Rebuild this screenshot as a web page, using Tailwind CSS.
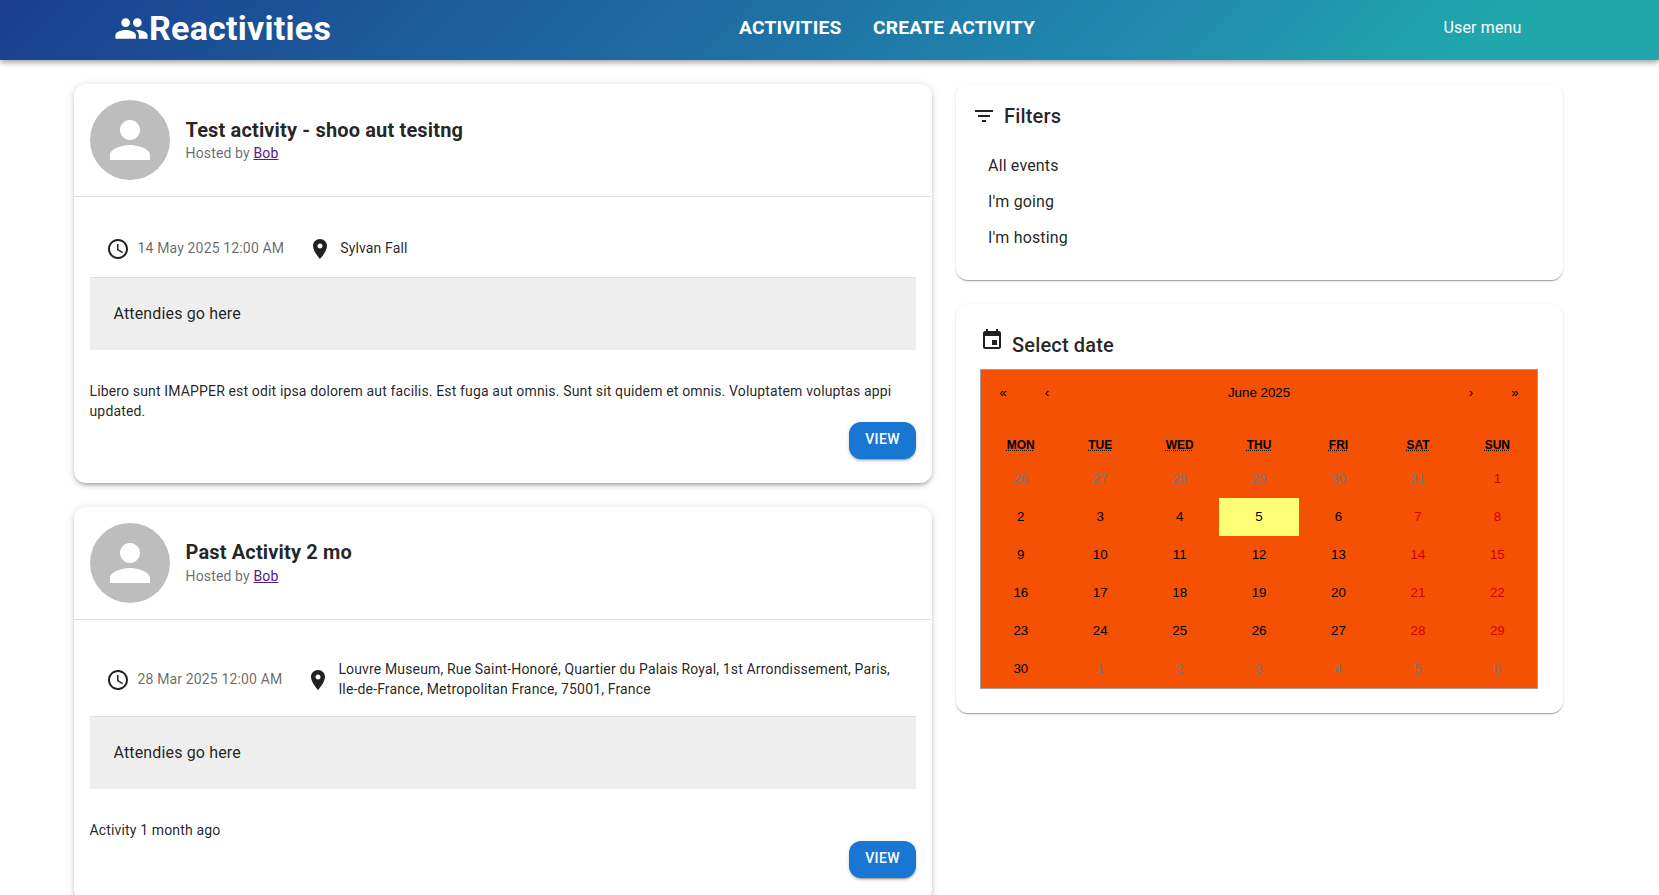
<!DOCTYPE html>
<html lang="en">
<head>
<meta charset="utf-8">
<title>Reactivities</title>
<script src="https://cdn.jsdelivr.net/npm/@tailwindcss/browser@4"></script>
</head>
<body class="bg-white font-['Roboto',sans-serif] text-black/87 overflow-hidden h-[895px]">
<header class="relative z-10 h-[60px] pb-[4px] flex items-center bg-[linear-gradient(135deg,#1a3f8f_0%,#218aae_69%,#20a7ac_89%)] text-white shadow-[0_2px_4px_-1px_rgba(0,0,0,0.2),0_4px_5px_0_rgba(0,0,0,0.14),0_1px_10px_0_rgba(0,0,0,0.12)]">
  <div class="ml-[114px] flex items-center w-[217px] shrink-0">
    <svg viewBox="0 0 24 24" class="w-[35px] h-[35px] fill-white shrink-0"><path d="M16 11c1.66 0 2.99-1.34 2.99-3S17.66 5 16 5s-3 1.34-3 3 1.34 3 3 3m-8 0c1.66 0 2.99-1.34 2.99-3S9.66 5 8 5 5 6.34 5 8s1.34 3 3 3m0 2c-2.33 0-7 1.17-7 3.5V19h14v-2.5c0-2.33-4.67-3.5-7-3.5m8 0c-.29 0-.62.02-.97.05 1.16.84 1.97 1.97 1.97 3.45V19h6v-2.5c0-2.33-4.67-3.5-7-3.5"/></svg>
    <span class="text-[34px] font-bold leading-[40px] tracking-[0.25px]">Reactivities</span>
  </div>
  <nav class="ml-[408px] flex gap-[31.5px] text-[19.2px] font-bold uppercase tracking-[0.2px]">
    <a>Activities</a>
    <a>Create activity</a>
  </nav>
  <div class="ml-auto mr-[137.5px] text-base tracking-[0.15px]">User menu</div>
</header>

<main class="ml-[73.5px] w-[1489px] pt-6 grid grid-cols-12 gap-6 items-start tracking-[0.15px]">
  <div class="col-span-7 flex flex-col gap-6">
    <article class="rounded-xl bg-white pb-6 shadow-[0_3px_3px_-2px_rgba(0,0,0,0.2),0_3px_4px_0_rgba(0,0,0,0.14),0_1px_8px_0_rgba(0,0,0,0.12)]">
      <div class="flex items-center gap-4 p-4 border-b border-[#e0e0e0] h-[113px]">
        <div class="w-20 h-20 rounded-full bg-[#bdbdbd] flex items-center justify-center shrink-0">
          <svg viewBox="0 0 24 24" class="w-[60px] h-[60px] fill-white"><path d="M12 12c2.21 0 4-1.79 4-4s-1.79-4-4-4-4 1.79-4 4 1.79 4 4 4zm0 2c-2.67 0-8 1.34-8 4v2h16v-2c0-2.66-5.33-4-8-4z"/></svg>
        </div>
        <div>
          <div class="text-xl font-bold leading-[32px] mt-[-3px] h-[29px]">Test activity - shoo aut tesitng</div>
          <div class="text-sm leading-5 text-black/60">Hosted by <a class="underline text-[#551a8b]">Bob</a></div>
        </div>
      </div>
      <div class="mx-4">
        <div class="flex items-center pl-4 pr-4 pt-10 pb-4 text-sm leading-5">
          <svg viewBox="0 0 24 24" class="w-6 h-6 fill-black/87 shrink-0"><path d="M11.99 2C6.47 2 2 6.48 2 12s4.47 10 9.99 10C17.52 22 22 17.52 22 12S17.52 2 11.99 2M12 20c-4.42 0-8-3.58-8-8s3.58-8 8-8 8 3.58 8 8-3.58 8-8 8m.5-13H11v6l5.25 3.15.75-1.23-4.5-2.67z"/></svg>
          <span class="ml-2 text-black/60 whitespace-nowrap -translate-y-px">14 May 2025 12:00 AM</span>
          <svg viewBox="0 0 24 24" class="ml-6 w-6 h-6 fill-black/87 shrink-0"><path d="M12 2C8.13 2 5 5.13 5 9c0 5.25 7 13 7 13s7-7.75 7-13c0-3.87-3.13-7-7-7m0 9.5c-1.38 0-2.5-1.12-2.5-2.5s1.12-2.5 2.5-2.5 2.5 1.12 2.5 2.5-1.12 2.5-2.5 2.5"/></svg>
          <span class="ml-2 -translate-y-px">Sylvan Fall</span>
        </div>
        <div class="h-[73px] border-t border-[#e0e0e0] bg-[#eeeeee] pl-6 flex items-center text-base">Attendies go here</div>
        <p class="mt-[31px] text-sm leading-5">Libero sunt IMAPPER est odit ipsa dolorem aut facilis. Est fuga aut omnis. Sunt sit quidem et omnis. Voluptatem voluptas appi updated.</p>
        <div class="flex justify-end mt-[1px]">
          <button class="w-[67px] h-[37px] pb-1 rounded-xl bg-[#1976d2] text-white text-sm font-medium uppercase tracking-[0.4px] shadow-[0_3px_1px_-2px_rgba(0,0,0,0.2),0_2px_2px_0_rgba(0,0,0,0.14),0_1px_5px_0_rgba(0,0,0,0.12)]">View</button>
        </div>
      </div>
    </article>

    <article class="rounded-xl bg-white pb-6 shadow-[0_3px_3px_-2px_rgba(0,0,0,0.2),0_3px_4px_0_rgba(0,0,0,0.14),0_1px_8px_0_rgba(0,0,0,0.12)]">
      <div class="flex items-center gap-4 p-4 border-b border-[#e0e0e0] h-[113px]">
        <div class="w-20 h-20 rounded-full bg-[#bdbdbd] flex items-center justify-center shrink-0">
          <svg viewBox="0 0 24 24" class="w-[60px] h-[60px] fill-white"><path d="M12 12c2.21 0 4-1.79 4-4s-1.79-4-4-4-4 1.79-4 4 1.79 4 4 4zm0 2c-2.67 0-8 1.34-8 4v2h16v-2c0-2.66-5.33-4-8-4z"/></svg>
        </div>
        <div>
          <div class="text-xl font-bold leading-[32px] mt-[-4px] h-[30px]">Past Activity 2 mo</div>
          <div class="text-sm leading-5 text-black/60">Hosted by <a class="underline text-[#551a8b]">Bob</a></div>
        </div>
      </div>
      <div class="mx-4">
        <div class="flex items-center pl-4 pr-4 pt-10 pb-4 text-sm leading-5">
          <svg viewBox="0 0 24 24" class="w-6 h-6 fill-black/87 shrink-0"><path d="M11.99 2C6.47 2 2 6.48 2 12s4.47 10 9.99 10C17.52 22 22 17.52 22 12S17.52 2 11.99 2M12 20c-4.42 0-8-3.58-8-8s3.58-8 8-8 8 3.58 8 8-3.58 8-8 8m.5-13H11v6l5.25 3.15.75-1.23-4.5-2.67z"/></svg>
          <span class="ml-2 text-black/60 whitespace-nowrap -translate-y-px">28 Mar 2025 12:00 AM</span>
          <svg viewBox="0 0 24 24" class="ml-6 w-6 h-6 fill-black/87 shrink-0"><path d="M12 2C8.13 2 5 5.13 5 9c0 5.25 7 13 7 13s7-7.75 7-13c0-3.87-3.13-7-7-7m0 9.5c-1.38 0-2.5-1.12-2.5-2.5s1.12-2.5 2.5-2.5 2.5 1.12 2.5 2.5-1.12 2.5-2.5 2.5"/></svg>
          <span class="ml-2 -translate-y-px">Louvre Museum, Rue Saint-Honoré, Quartier du Palais Royal, 1st Arrondissement, Paris, Ile-de-France, Metropolitan France, 75001, France</span>
        </div>
        <div class="h-[73px] border-t border-[#e0e0e0] bg-[#eeeeee] pl-6 flex items-center text-base">Attendies go here</div>
        <p class="mt-[31px] text-sm leading-5">Activity 1 month ago</p>
        <div class="flex justify-end mt-[1px]">
          <button class="w-[67px] h-[37px] pb-1 rounded-xl bg-[#1976d2] text-white text-sm font-medium uppercase tracking-[0.4px] shadow-[0_3px_1px_-2px_rgba(0,0,0,0.2),0_2px_2px_0_rgba(0,0,0,0.14),0_1px_5px_0_rgba(0,0,0,0.12)]">View</button>
        </div>
      </div>
    </article>
  </div>

  <aside class="col-span-5 flex flex-col gap-6">
    <section class="h-[196px] rounded-xl bg-white shadow-[0_2px_1px_-1px_rgba(0,0,0,0.2),0_1px_1px_0_rgba(0,0,0,0.14),0_1px_3px_0_rgba(0,0,0,0.12)] pt-[16px]">
      <div class="flex items-center pl-[16px] h-[32px]">
        <svg viewBox="0 0 24 24" class="w-6 h-6 fill-black/87"><path d="M10 18h4v-2h-4zM3 6v2h18V6zm3 7h12v-2H6z"/></svg>
        <span class="ml-2 text-xl font-medium">Filters</span>
      </div>
      <ul class="mt-[16px] pl-8 text-base">
        <li class="h-9 flex items-center">All events</li>
        <li class="h-9 flex items-center">I'm going</li>
        <li class="h-9 flex items-center">I'm hosting</li>
      </ul>
    </section>

    <section class="h-[409px] rounded-xl bg-white shadow-[0_2px_1px_-1px_rgba(0,0,0,0.2),0_1px_1px_0_rgba(0,0,0,0.14),0_1px_3px_0_rgba(0,0,0,0.12)] px-6 pt-[24px]">
      <div class="relative h-[41px]">
        <svg viewBox="0 0 24 24" class="absolute left-0 top-0 w-6 h-6 fill-black/87"><path d="M17 12h-5v5h5zM16 1v2H8V1H6v2H5c-1.11 0-1.99.9-1.99 2L3 19c0 1.1.89 2 2 2h14c1.1 0 2-.9 2-2V5c0-1.1-.9-2-2-2h-1V1zm3 18H5V8h14z"/></svg>
        <span class="absolute left-[32px] top-[1px] text-xl font-medium leading-8">Select date</span>
      </div>
      <div class="w-[558px] h-[320px] border border-[#a0a096] bg-[#f55105] font-['Liberation_Sans',Arial,sans-serif] text-[13.33px] text-black tracking-normal">
        <div class="flex h-[45px] items-center text-center">
          <span class="w-[44px]">«</span>
          <span class="w-[44px]">‹</span>
          <span class="flex-1">June 2025</span>
          <span class="w-[44px]">›</span>
          <span class="w-[44px]">»</span>
        </div>
        <div class="mt-[15px] grid grid-cols-7 h-[30px] items-center text-center text-xs font-bold uppercase">
          <span><abbr class="underline decoration-dotted">Mon</abbr></span>
          <span><abbr class="underline decoration-dotted">Tue</abbr></span>
          <span><abbr class="underline decoration-dotted">Wed</abbr></span>
          <span><abbr class="underline decoration-dotted">Thu</abbr></span>
          <span><abbr class="underline decoration-dotted">Fri</abbr></span>
          <span><abbr class="underline decoration-dotted">Sat</abbr></span>
          <span><abbr class="underline decoration-dotted">Sun</abbr></span>
        </div>
        <div class="grid grid-cols-7 auto-rows-[38px] items-center text-center">
          <span class="text-[#757575]">26</span><span class="text-[#757575]">27</span><span class="text-[#757575]">28</span><span class="text-[#757575]">29</span><span class="text-[#757575]">30</span><span class="text-[#757575]">31</span><span class="text-[#d10000]">1</span>
          <span>2</span><span>3</span><span>4</span><span class="h-[38px] leading-[38px] bg-[#ffff76]">5</span><span>6</span><span class="text-[#d10000]">7</span><span class="text-[#d10000]">8</span>
          <span>9</span><span>10</span><span>11</span><span>12</span><span>13</span><span class="text-[#d10000]">14</span><span class="text-[#d10000]">15</span>
          <span>16</span><span>17</span><span>18</span><span>19</span><span>20</span><span class="text-[#d10000]">21</span><span class="text-[#d10000]">22</span>
          <span>23</span><span>24</span><span>25</span><span>26</span><span>27</span><span class="text-[#d10000]">28</span><span class="text-[#d10000]">29</span>
          <span>30</span><span class="text-[#757575]">1</span><span class="text-[#757575]">2</span><span class="text-[#757575]">3</span><span class="text-[#757575]">4</span><span class="text-[#757575]">5</span><span class="text-[#757575]">6</span>
        </div>
      </div>
    </section>
  </aside>
</main>
</body>
</html>
